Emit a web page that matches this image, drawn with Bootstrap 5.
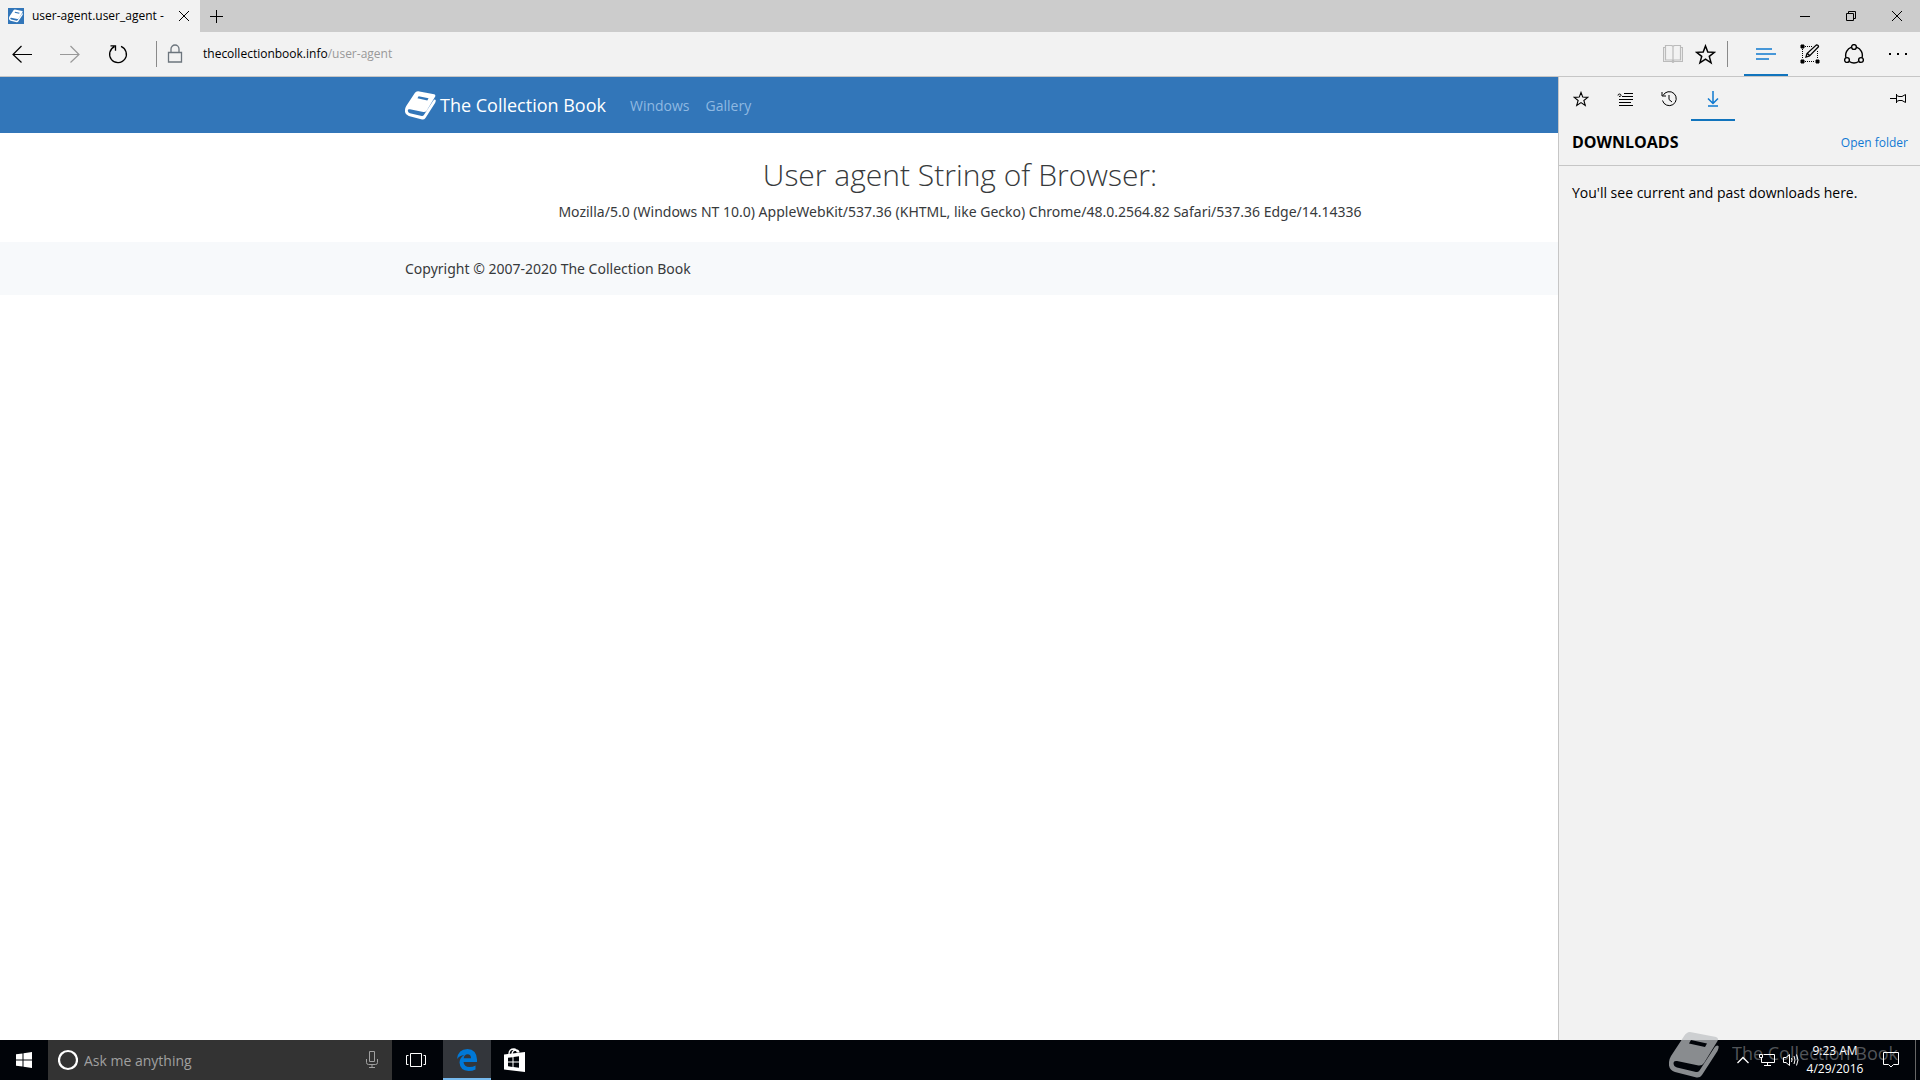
<!DOCTYPE html>
<html lang="en">
<head>
<meta charset="utf-8">
<meta name="viewport" content="width=device-width, initial-scale=1">
<title>user-agent.user_agent - The Collection Book</title>
<link rel="stylesheet" href="https://cdn.jsdelivr.net/npm/bootstrap@5.3.0/dist/css/bootstrap.min.css">
<style>
body{font-family:"Segoe UI","Open Sans","Noto Sans",sans-serif;font-size:14px;color:#373a3c;background:#fff}
svg{display:block;fill:none;stroke:currentColor;flex:none}
.tabstrip{background:#ccc;height:32px;color:#000}
.tab-item{width:200px;background:#f2f2f2;font-size:12px;padding:0 10px 0 8px}
.tool{border:0;background:none;padding:0;color:#000;display:flex;align-items:center;justify-content:center;flex:none}
.tool-44{width:44px;height:44px}
.tool-46{width:46px;height:32px}
.tool-32{width:32px;height:44px}
.tool-48{width:48px;height:40px;color:#fff}
.dim{color:#999}
.dimmer{color:#bbb}
.picked{color:#0f79d0;box-shadow:inset 0 -2px #1174bd}
.toolbar{background:#f2f2f2;height:45px;border-bottom:1px solid #c6c6c6}
.rule{width:1px;height:26px;background:#8a8a8a}
.rule-end{margin:0 16px 0 6px}
.url-text{font-size:12px;color:#000;margin-left:18px}
.site-nav{background:#3276b9;height:56px}
.site-box{width:100%;max-width:1140px;margin:0 auto;padding:0 15px}
.brand{font-size:18px;color:#fff}
.site-link{color:#8fb9e2}
.ua-title{font-size:30px;font-weight:300;line-height:40px;padding-top:22px;margin-bottom:5px}
.ua-text{font-family:"Segoe UI","Noto Sans",sans-serif;line-height:24px;margin-bottom:18px}
.site-foot{font-family:"Segoe UI","Noto Sans",sans-serif;background:#f7f9fb;height:53px}
.hub{position:absolute;top:0;right:0;bottom:0;width:362px;background:#f2f2f2;border-left:1px solid #c6c6c6;color:#000}
.hub-head{height:45px;padding:0 12px 0 13px;border-bottom:1px solid #c6c6c6}
.hub-title{font-size:16px;font-weight:700}
.hub-link{font-size:12px;color:#1079d4}
.hub-note{padding:16px 13px 0;line-height:22px}
.taskbar{background:#010409;height:40px;color:#fff}
.cortana{width:344px;background:#333;color:#a0a0a0;padding:0 14px 0 10px}
.cortana-field{border:0;background:none;outline:0;padding:0 0 0 6px;min-width:0}
.cortana-field::placeholder{color:#a0a0a0;opacity:1}
.running{background:#33363b;color:#0078d7;box-shadow:inset 0 -2px #76b9ed}
.task-view{margin-right:3px}
.tray{padding-right:4px}
.tray-cell{width:24px;height:40px;color:#fff}
.tray-clock{font-size:12px;line-height:18px;width:64px;color:#fff}
.tray-edge{width:1px;background:#666;margin-left:0}
.watermark{position:absolute;right:22px;bottom:2px;font-size:18px;color:rgba(190,192,195,.72);pointer-events:none;gap:13px}
.watermark span{opacity:.6;padding-bottom:4px}
</style>
<script src="https://cdn.jsdelivr.net/npm/bootstrap@5.3.0/dist/js/bootstrap.bundle.min.js"></script>
</head>
<body class="vh-100 d-flex flex-column overflow-hidden">
<svg width="0" height="0" class="position-absolute" aria-hidden="true">
  <symbol id="book" viewBox="0 0 50 46">
    <path stroke="none" fill="currentColor" fill-rule="evenodd" d="M18 1Q19 0 21 0L47 5Q50 6 48.500 9L35 31Q33 34 29.500 33.500L8 29Q4.500 28.500 4.500 31Q4.500 34.500 8 35.500L27 40Q29 40.500 30.500 38.500L45.500 15.500Q47.500 12.500 49.500 14Q50 16 48.500 19L33 43Q31 46 27.500 45.500L6 40Q-1 37.500 0 30Q0 27.500 2 24L14.500 5Q16 2 18 1ZM22 8L20 11.500L36 15L38 11.500Z"/>
  </symbol>
  <symbol id="star" viewBox="0 0 20 20"><path fill="none" stroke="currentColor" stroke-width="1.400" d="M10 1.800L12.200 7.600L18.500 7.900L13.600 11.800L15.300 18L10 14.500L4.700 18L6.400 11.800L1.500 7.900L7.800 7.600Z"/></symbol>
</svg>

<header>
  <div class="tabstrip d-flex">
    <div class="tab-item d-flex align-items-center">
      <svg width="16" height="16" viewBox="0 0 16 16"><path fill="#3276b9" stroke="none" d="M0 0h16v16H0z"/><use href="#book" x="1" y="1" width="14" height="14" color="#fff"/></svg>
      <span class="ms-2 flex-grow-1 text-nowrap">user-agent.user_agent -</span>
      <button class="tool" aria-label="Close tab"><svg width="12" height="12" viewBox="0 0 12 12"><path d="M1 1l10 10M11 1L1 11"/></svg></button>
    </div>
    <button class="tool tool-32 h-100" aria-label="New tab"><svg width="14" height="14" viewBox="0 0 14 14"><path d="M7.500 1v13M1 7.500h13"/></svg></button>
    <div class="ms-auto d-flex">
      <button class="tool tool-46" aria-label="Minimize"><svg width="10" height="10" viewBox="0 0 10 10"><path d="M0 5.500h10"/></svg></button>
      <button class="tool tool-46" aria-label="Restore"><svg width="10" height="10" viewBox="0 0 10 10"><path d="M.5 2.500h7v7h-7zM2.500 2.500v-2h7v7h-2"/></svg></button>
      <button class="tool tool-46" aria-label="Close"><svg width="10" height="10" viewBox="0 0 10 10"><path d="M0 0l10 10M10 0L0 10"/></svg></button>
    </div>
  </div>
  <div class="toolbar d-flex align-items-center">
    <div class="d-flex gap-1">
      <button class="tool tool-44" aria-label="Back"><svg width="20" height="18" viewBox="0 0 20 18" stroke-width="1.200"><path d="M20 9.500H1M9.500 1L1 9.500l8.500 8"/></svg></button>
      <button class="tool tool-44 dim" aria-label="Forward"><svg width="20" height="18" viewBox="0 0 20 18" stroke-width="1.200"><path d="M0 9.500h19M10.500 1L19 9.500l-8.500 8"/></svg></button>
      <button class="tool tool-44" aria-label="Refresh"><svg width="20" height="20" viewBox="0 0 20 20" stroke-width="1.300"><path d="M13 2.400a8.400 8.400 0 1 1-6.500.2M2.500 1.800h5v5"/></svg></button>
    </div>
    <div class="rule ms-3"></div>
    <svg class="ms-2 text-secondary" width="20" height="20" viewBox="0 0 20 20" stroke-width="1.300"><path d="M3.500 8.500h13v9.500h-13zM6 8.500V5a4 4 0 0 1 8 0v3.500"/></svg>
    <a class="url-text text-decoration-none" href="#">thecollectionbook.info<span class="dim">/user-agent</span></a>
    <div class="ms-auto d-flex align-items-center">
      <button class="tool tool-32 dimmer" aria-label="Reading view"><svg width="20" height="18" viewBox="0 0 20 18" stroke-width="1.200"><path d="M2.500 2.500h-2v14H9l1 1 1-1h8.500v-14h-2M2.500.5H8q1.500 0 2 1 .5-1 2-1h5.500V15H11l-1 1-1-1H2.500zM10 1v15"/></svg></button>
      <button class="tool tool-32" aria-label="Add to favorites"><svg width="21" height="21"><use href="#star"/></svg></button>
      <div class="rule rule-end"></div>
      <button class="tool tool-44 picked" aria-label="Hub"><svg width="20" height="12" viewBox="0 0 20 12" stroke-width="1.500"><path d="M0 1h16M0 6h20M0 11h13"/></svg></button>
      <button class="tool tool-44" aria-label="Make a web note"><svg width="20" height="20" viewBox="0 0 20 20"><path stroke-dasharray="1 1" d="M5 2.500h8M2.500 5v10M5 17.500h10M17.500 7v8"/><path fill="currentColor" d="M1 1h3v3H1zM1 16h3v3H1zM16 16h3v3h-3z"/><path stroke-width="1.300" d="M6 13l1-3.500L16.500.8q2 0 2 2L9.500 12zM7.500 9.500l2 2"/></svg></button>
      <button class="tool tool-44" aria-label="Share"><svg width="20" height="20" viewBox="0 0 20 20" stroke-width="1.400"><circle cx="10" cy="3" r="2.400"/><circle cx="3" cy="16" r="2.400"/><circle cx="17" cy="16" r="2.400"/><path d="M7.500 3.200A8.500 8.500 0 0 0 2 13.700M12.500 3.200A8.500 8.500 0 0 1 18 13.700M5.300 17.500a8.500 8.500 0 0 0 9.400 0"/></svg></button>
      <button class="tool tool-44" aria-label="More"><svg width="18" height="4" viewBox="0 0 18 4"><path fill="currentColor" stroke="none" d="M0 1h2v2H0zM8 1h2v2H8zM16 1h2v2h-2z"/></svg></button>
    </div>
  </div>
</header>

<main class="position-relative flex-grow-1">
  <nav class="site-nav d-flex">
    <div class="site-box d-flex align-items-center">
      <a class="brand d-flex align-items-center text-decoration-none" href="#"><svg class="me-1" width="31" height="29"><use href="#book"/></svg>The Collection Book</a>
      <a class="site-link ms-4 text-decoration-none" href="#">Windows</a>
      <a class="site-link ms-3 text-decoration-none" href="#">Gallery</a>
    </div>
  </nav>
  <section class="site-box text-center">
    <h1 class="ua-title">User agent String of Browser:</h1>
    <p class="ua-text">Mozilla/5.0 (Windows NT 10.0) AppleWebKit/537.36 (KHTML, like Gecko) Chrome/48.0.2564.82 Safari/537.36 Edge/14.14336</p>
  </section>
  <footer class="site-foot d-flex align-items-center"><div class="site-box">Copyright © 2007-2020 The Collection Book</div></footer>

  <aside class="hub">
    <div class="d-flex">
      <button class="tool tool-44" aria-label="Favorites"><svg width="16" height="16"><use href="#star"/></svg></button>
      <button class="tool tool-44" aria-label="Reading list"><svg width="16" height="14" viewBox="0 0 16 14"><path d="M7 1.500h9M5 4.500h11M2 7.500h14M2 10.500h12M2 13.500h14M1 3.500a1.500 1.500 0 1 1 3 0q0 1-2 1"/></svg></button>
      <button class="tool tool-44" aria-label="History"><svg width="16" height="16" viewBox="0 0 16 16"><path d="M2 4.500a7 7 0 1 1-.5 5M1 1v4h4M8 4v4.500l3 2.500"/></svg></button>
      <button class="tool tool-44 picked" aria-label="Downloads"><svg width="12" height="16" viewBox="0 0 12 16" stroke-width="1.500"><path d="M6 0v12M1 7.500l5 5 5-5M1 15h10"/></svg></button>
      <button class="tool tool-44 ms-auto" aria-label="Pin this pane"><svg width="16" height="10" viewBox="0 0 16 10"><path d="M0 4.500h6M6.500 0v9M6.500 1.500L9 2.500h3l3.500-2v8l-3.500-2H9L6.500 7.500"/></svg></button>
    </div>
    <div class="hub-head d-flex align-items-center justify-content-between">
      <h2 class="hub-title mb-0">DOWNLOADS</h2><a class="hub-link text-decoration-none" href="#">Open folder</a>
    </div>
    <p class="hub-note mb-0">You'll see current and past downloads here.</p>
  </aside>
</main>

<footer class="taskbar d-flex position-relative">
  <button class="tool tool-48" aria-label="Start"><svg width="16" height="16" viewBox="0 0 16 16"><path fill="currentColor" stroke="none" d="M0 2.300L6.500 1.400V7.500H0zM7.500 1.200L16 0v7.500H7.500zM0 8.500h6.500v6.100L0 13.700zM7.500 8.500H16V16l-8.500-1.200z"/></svg></button>
  <div class="cortana d-flex align-items-center">
    <svg width="20" height="22" viewBox="0 0 20 22"><circle cx="10" cy="11" r="9" stroke="#fff" stroke-width="2.200"/></svg>
    <input class="cortana-field flex-grow-1" type="text" placeholder="Ask me anything" aria-label="Ask me anything">
    <svg width="12" height="18" viewBox="0 0 12 18"><path d="M3.500.5h5v10h-5zM.5 8v3.500q0 2 2 2h7q2 0 2-2V8M6 13.500v3M3 16.500h6"/></svg>
  </div>
  <button class="tool tool-48 task-view" aria-label="Task view"><svg width="20" height="14" viewBox="0 0 20 14"><path d="M4.500.5h11v13h-11zM2.500 2.500h-2v9h2M17.500 2.500h2v9h-2"/></svg></button>
  <button class="tool tool-48 running" aria-label="Microsoft Edge"><svg width="22" height="22" viewBox="0 0 22 22"><path fill="currentColor" stroke="none" d="M1 10Q2.200 0 11.500 0Q20.500.5 21 10.500V13H7.500Q8 18 13.500 18Q17 18 19.500 16.500V20.500Q16.500 22 12.500 22Q4 21.500 3.500 13.500Q3.700 8.500 8.200 6Q3.500 6.500 1 10ZM7.700 9.200H15Q15 5.300 11.500 5.200Q8.200 5.500 7.700 9.200Z"/></svg></button>
  <button class="tool tool-48" aria-label="Store"><svg width="22" height="24" viewBox="0 0 22 24"><path fill="currentColor" stroke="none" fill-rule="evenodd" d="M0 6.500L21 4V24L0 21.500ZM4 9.800V13.500H8.500V9.200ZM9.500 9.100V13.500H15V8.300ZM4 14.500V18.300L8.500 18.900V14.500ZM9.500 14.500V19L15 19.700V14.500Z"/><path stroke-width="1.300" d="M5 6Q5 1 10 1q2.500 0 3.500 3.500M8 6q.5-4 4-4 2.500 0 3 2.500"/></svg></button>

  <div class="watermark d-flex align-items-center" aria-hidden="true"><svg width="50" height="46"><use href="#book"/></svg><span>The Collection Book</span></div>

  <div class="tray d-flex align-items-center ms-auto position-relative">
    <button class="tool tray-cell" aria-label="Show hidden icons"><svg width="12" height="8" viewBox="0 0 12 8" stroke-width="1.300"><path d="M.5 7L6 1.500 11.500 7"/></svg></button>
    <button class="tool tray-cell" aria-label="Network"><svg width="16" height="14" viewBox="0 0 16 14"><path d="M4.500 1.500h11v8h-13V5M8.500 9.500v3M5 12.500h7M.5 1.500h3v3h-3z"/></svg></button>
    <button class="tool tray-cell" aria-label="Volume"><svg width="16" height="14" viewBox="0 0 16 14"><path d="M.5 4.500H3l3.500-3v11L3 9.500H.5zM8.500 5q1 2 0 4M11 3q2 4 0 8M13.500 1.500q3 5.500 0 11"/></svg></button>
    <button class="tool tray-clock text-center flex-column"><span>9:23 AM</span><span>4/29/2016</span></button>
    <button class="tool tool-48" aria-label="Action center"><svg width="16" height="16" viewBox="0 0 16 16"><path d="M.5.500h15v12H10.500L8 15 5.500 12.500H.5z"/></svg></button>
    <div class="tray-edge align-self-stretch"></div>
  </div>
</footer>
</body>
</html>
